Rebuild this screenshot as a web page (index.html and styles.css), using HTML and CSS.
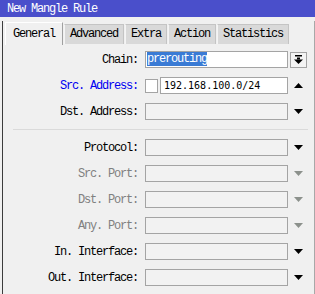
FILE: index.html
```html
<!DOCTYPE html>
<html lang="en">

<head>
    <meta charset="UTF-8">
    <title>New Mangle Rule</title>
    <link rel="stylesheet" href="styles.css">
</head>

<body>
    <div class="titlebar">New Mangle Rule</div>

    <div class="frame">
        <div class="tabs">
            <div class="tab active">General</div>
            <div class="tab">Advanced</div>
            <div class="tab">Extra</div>
            <div class="tab">Action</div>
            <div class="tab">Statistics</div>
        </div>

        <div class="panel">
            <div class="row">
                <label class="label">Chain:</label>
                <div class="field white"><span class="selected">prerouting</span></div>
                <div class="dropbtn">
                    <svg width="9" height="9" viewBox="0 0 9 9"><rect x="1" y="0" width="7" height="1.5" fill="#000"/><rect x="3" y="2.5" width="3" height="2" fill="#000"/><polygon points="0,4.5 9,4.5 4.5,9" fill="#000"/></svg>
                </div>
            </div>

            <div class="row">
                <label class="label blue">Src. Address:</label>
                <div class="check"></div>
                <div class="field white short value">192.168.100.0/24</div>
                <div class="arrow"><svg width="9" height="5" viewBox="0 0 9 5"><polygon points="0,5 9,5 4.5,0" fill="#000"/></svg></div>
            </div>

            <div class="row">
                <label class="label">Dst. Address:</label>
                <div class="field"></div>
                <div class="arrow"><svg width="9" height="5" viewBox="0 0 9 5"><polygon points="0,0 9,0 4.5,5" fill="#000"/></svg></div>
            </div>

            <div class="sep"></div>

            <div class="row">
                <label class="label">Protocol:</label>
                <div class="field"></div>
                <div class="arrow"><svg width="9" height="5" viewBox="0 0 9 5"><polygon points="0,0 9,0 4.5,5" fill="#000"/></svg></div>
            </div>

            <div class="row">
                <label class="label gray">Src. Port:</label>
                <div class="field"></div>
                <div class="arrow"><svg width="9" height="5" viewBox="0 0 9 5"><polygon points="0,0 9,0 4.5,5" fill="#8c918c"/></svg></div>
            </div>

            <div class="row">
                <label class="label gray">Dst. Port:</label>
                <div class="field"></div>
                <div class="arrow"><svg width="9" height="5" viewBox="0 0 9 5"><polygon points="0,0 9,0 4.5,5" fill="#8c918c"/></svg></div>
            </div>

            <div class="row">
                <label class="label gray">Any. Port:</label>
                <div class="field"></div>
                <div class="arrow"><svg width="9" height="5" viewBox="0 0 9 5"><polygon points="0,0 9,0 4.5,5" fill="#8c918c"/></svg></div>
            </div>

            <div class="row">
                <label class="label">In. Interface:</label>
                <div class="field"></div>
                <div class="arrow"><svg width="9" height="5" viewBox="0 0 9 5"><polygon points="0,0 9,0 4.5,5" fill="#000"/></svg></div>
            </div>

            <div class="row">
                <label class="label">Out. Interface:</label>
                <div class="field"></div>
                <div class="arrow"><svg width="9" height="5" viewBox="0 0 9 5"><polygon points="0,0 9,0 4.5,5" fill="#000"/></svg></div>
            </div>
        </div>
    </div>
</body>

</html>
```

FILE: styles.css
```css
* {
    box-sizing: border-box;
}

body {
    margin: 0;
    background-color: #f0f0f0;
    font-family: "Liberation Mono", monospace;
    font-size: 12px;
    letter-spacing: -1.2px;
    color: #000;
    width: 315px;
    height: 294px;
    overflow: hidden;
}

.titlebar {
    height: 17px;
    background-color: #4a4fcb;
    color: #fff;
    padding-left: 7px;
    line-height: 18px;
}

.frame {
    margin-top: 4px;
    margin-left: 2px;
    height: 273px;
    border-left: 1px solid #3c3c3c;
    border-right: 1px solid #a8a8a8;
}

.tabs {
    display: flex;
    align-items: flex-end;
    padding-left: 2px;
    height: 23px;
}

.tab {
    height: 20px;
    line-height: 19px;
    padding: 0 5px;
    background-color: #d9d9d9;
    border: 1px solid #c4c4c4;
    border-left-color: #f4f4f4;
    border-bottom: none;
    margin-right: 1px;
}

.tab.active {
    height: 23px;
    line-height: 22px;
    padding: 0 7px;
    background-color: #f0f0f0;
    border-color: #fff;
    border-right-color: #a0a0a0;
    margin-bottom: -1px;
}

.panel {
    display: flex;
    flex-direction: column;
    gap: 9px;
    padding-top: 7px;
}

.row {
    display: flex;
    align-items: center;
    height: 17px;
}

.label {
    width: 135px;
    text-align: right;
    margin-right: 7px;
}

.label.blue {
    color: #0000f0;
}

.label.gray {
    color: #808080;
}

.field {
    width: 143px;
    height: 17px;
    border: 1px solid #a4a4a4;
    background-color: #f2f2f2;
    line-height: 15px;
    padding-left: 1px;
    white-space: nowrap;
    overflow: hidden;
}

.field.white {
    background-color: #fff;
}

.field.short {
    width: 128px;
    margin-left: 2px;
    padding-left: 3px;
}

.value {
    font-family: "DejaVu Sans Mono", monospace;
    font-size: 10px;
    letter-spacing: 0;
}

.selected {
    background-color: #3a7bd5;
    color: #fff;
}

.check {
    width: 13px;
    height: 14px;
    border: 1px solid #a4a4a4;
    background-color: #fff;
}

.dropbtn {
    width: 17px;
    height: 16px;
    margin-left: 2px;
    border: 1px solid #a4a4a4;
    background-color: #f4f4f4;
    display: flex;
    align-items: center;
    justify-content: center;
}

.dropbtn svg,
.arrow svg {
    display: block;
}

.arrow {
    width: 17px;
    margin-left: 2px;
    display: flex;
    justify-content: center;
}

.sep {
    height: 1px;
    margin: 0 6px 0 10px;
    background-color: #dadada;
}
```
